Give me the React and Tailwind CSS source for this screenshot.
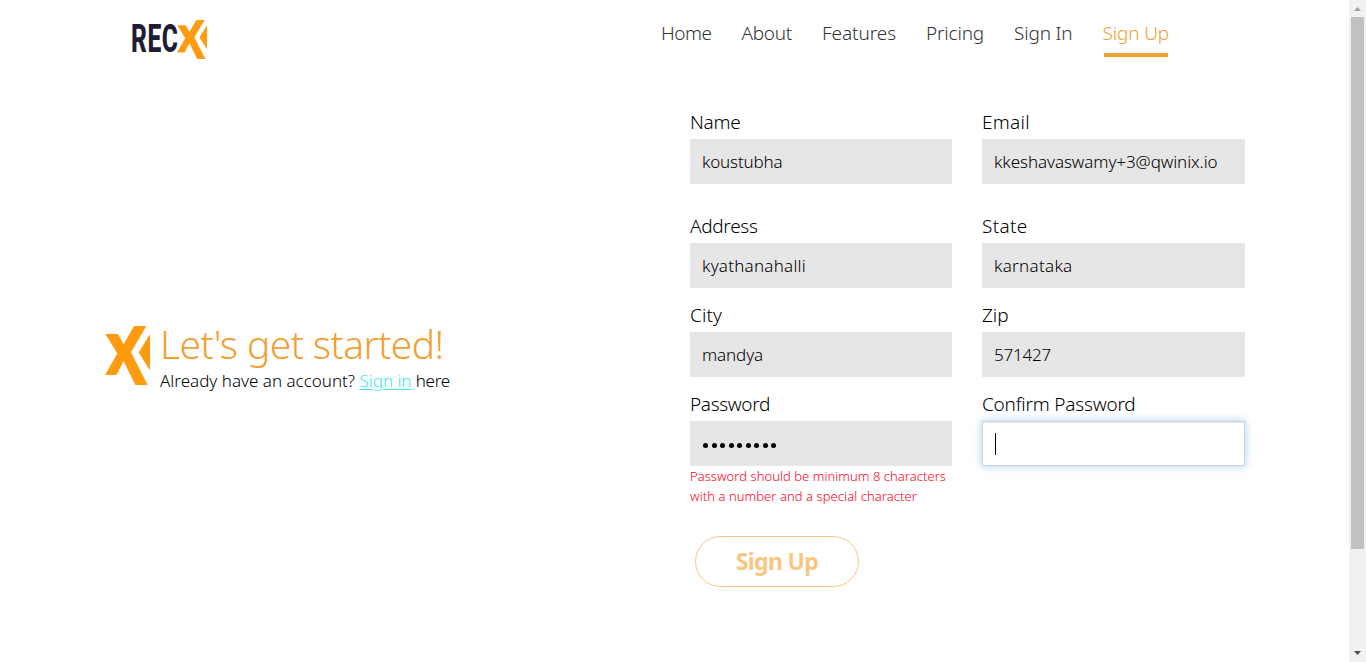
import { useLayoutEffect, useRef, useState } from "react";

function Mark({ className }) {
  return (
    <svg viewBox="30 47 135 178" preserveAspectRatio="none" className={className} fill="#ff9b0f" aria-hidden="true">
      <path d="M31 71H69L86 102L117 47H154L108 126L158 225H121L86 153L64 195H30L67 130Z" />
      <path d="M165 71V181L131 127Z" />
    </svg>
  );
}

// Spreads a single line of text over a fixed measure by adjusting its tracking.
function Line({ width, className = "", children }) {
  const ref = useRef(null);
  const [tracking, setTracking] = useState(0);
  useLayoutEffect(() => {
    const natural = ref.current.getBoundingClientRect().width;
    setTracking((width - natural) / children.length);
  }, []);
  return (
    <span ref={ref} className={`inline-block whitespace-pre ${className}`} style={{ letterSpacing: tracking }}>
      {children}
    </span>
  );
}

const links = [
  ["Home", 50.5],
  ["About", 50.5],
  ["Features", 74],
  ["Pricing", 58],
  ["Sign In", 58.5],
];

function Field({ label, labelWidth, value, valueWidth, className = "" }) {
  return (
    <div className={className}>
      <label className="block h-[34px] text-[19px] leading-[34px]">
        <Line width={labelWidth}>{label}</Line>
      </label>
      <div className="flex h-[45px] items-center bg-[#e6e6e6] px-3 text-[17px]">
        <Line width={valueWidth}>{value}</Line>
      </div>
    </div>
  );
}

export default function App() {
  return (
    <div className="flex h-[662px] w-full overflow-hidden bg-white font-['Noto_Sans','Open_Sans',sans-serif] font-light text-black">
      <div className="flex min-w-0 flex-1 flex-col">
        <header className="flex h-[105px] items-start pl-[131px]">
          <div className="flex h-[59px] w-[530px] items-start pt-5">
            <div className="h-[39px] w-[46px]">
              <span className="block w-max origin-left scale-x-[0.63] font-[Roboto,sans-serif] text-[39px] leading-[38px] font-extrabold tracking-[0.8px] text-[#1e1d35]">REC</span>
            </div>
            <Mark className="h-[39px] w-[30px]" />
          </div>
          <nav className="flex gap-[30px] pt-4 text-[19px] leading-[35px] text-[#333]">
            {links.map(([text, width]) => (
              <a key={text}><Line width={width}>{text}</Line></a>
            ))}
            <a className="flex flex-col text-[#f2a033]">
              <Line width={66.5} className="h-[37px]">Sign Up</Line>
              <span className="ml-px h-1 w-16 bg-[#f2a033]" />
            </a>
          </nav>
        </header>
        <main className="flex flex-1">
          <section className="flex w-[690px] items-start pt-[221px] pl-[105px]">
            <Mark className="h-[59px] w-[45px]" />
            <div className="pl-[10px]">
              <h1 className="h-[43px] text-[39px] leading-[36px] text-[#f2a033]"><Line width={283.5}>Let's get started!</Line></h1>
              <p className="flex text-[17px] leading-6">
                <Line width={199.5}>Already have an account? </Line>
                <a className="text-[#3ce8f5]"><Line width={52} className="underline underline-offset-2">Sign in</Line></a>
                <Line width={38.5}> here</Line>
              </p>
            </div>
          </section>
          <form className="w-[555px]">
            <div className="grid grid-cols-[262px_263px] gap-x-[30px]">
              <Field label="Name" labelWidth={50.5} value="koustubha" valueWidth={80.5} className="h-[104px]" />
              <Field label="Email" labelWidth={48} value="kkeshavaswamy+3@qwinix.io" valueWidth={223.5} className="h-[104px]" />
              <Field label="Address" labelWidth={67.5} value="kyathanahalli" valueWidth={104} className="h-[89px]" />
              <Field label="State" labelWidth={45.5} value="karnataka" valueWidth={78.5} className="h-[89px]" />
              <Field label="City" labelWidth={32} value="mandya" valueWidth={61} className="h-[89px]" />
              <Field label="Zip" labelWidth={26.5} value="571427" valueWidth={57} className="h-[89px]" />
              <div>
                <label className="block h-[34px] text-[19px] leading-[34px]"><Line width={80}>Password</Line></label>
                <div className="flex h-[45px] items-center gap-[3.5px] bg-[#e6e6e6] px-[13px] pt-[3px]">
                  {Array.from({ length: 9 }, (_, i) => (
                    <span key={i} className="size-[5px] rounded-full bg-black" />
                  ))}
                </div>
                <p className="text-[13px] leading-5 text-[#ff0018]">
                  <Line width={256}>Password should be minimum 8 characters</Line>
                  <Line width={227}>with a number and a special character</Line>
                </p>
              </div>
              <div>
                <label className="block h-[34px] text-[19px] leading-[34px]"><Line width={153.5}>Confirm Password</Line></label>
                <div className="flex h-[45px] items-center border border-[#ccd5dc] bg-white px-3 shadow-[inset_0_1px_1px_rgba(0,0,0,0.075),0_0_8px_rgba(102,175,233,0.6)]">
                  <span className="h-[22px] w-px bg-black" />
                </div>
              </div>
            </div>
            <button type="button" className="mt-[30px] ml-[5px] flex h-[51px] w-[164px] items-center justify-center rounded-full border border-[#f9c681] text-[23px] font-bold text-[#f9c681]">
              <Line width={82.5}>Sign Up</Line>
            </button>
          </form>
        </main>
      </div>
      <aside className="flex w-[17px] flex-col items-center bg-[#f1f1f1]">
        <svg className="h-[17px] w-[17px]" viewBox="0 0 17 17" fill="#a3a3a3"><path d="M5 11H12L8.5 7Z" /></svg>
        <div className="h-[532px] w-[13px] bg-[#c1c1c1]" />
        <svg className="mt-auto h-[17px] w-[17px]" viewBox="0 0 17 17" fill="#505050"><path d="M5 6H12L8.5 10Z" /></svg>
      </aside>
    </div>
  );
}
